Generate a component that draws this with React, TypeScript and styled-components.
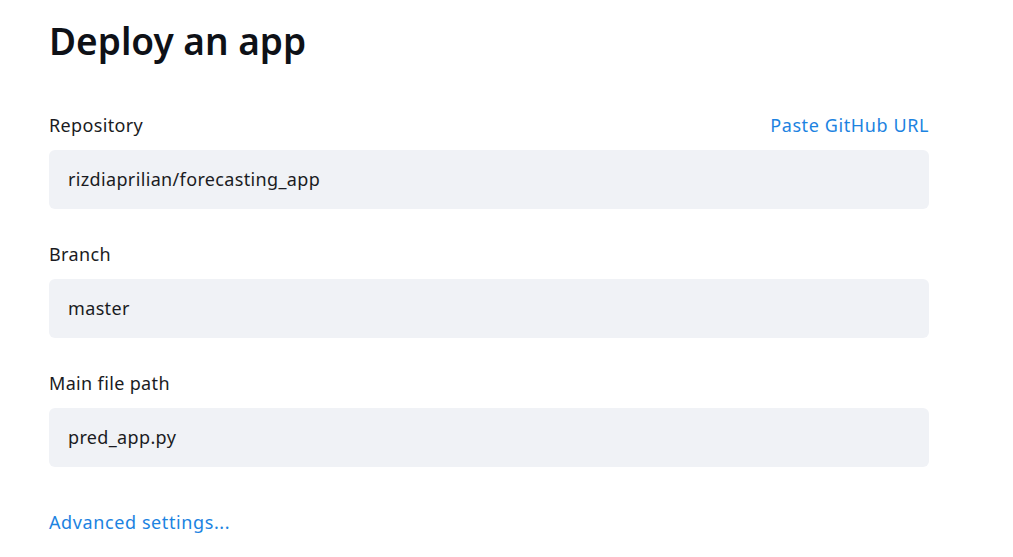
import React from "react";
import styled, { createGlobalStyle } from "styled-components";

const Global = createGlobalStyle`
  html, body { margin: 0; padding: 0; background: #ffffff; }
  body { font-family: "Noto Sans", "Open Sans", sans-serif; color: #262730; }
`;

const Page = styled.main`
  width: 880px;
  padding: 18px 0 0 49px;
  display: flex;
  flex-direction: column;
`;

const Title = styled.h1`
  margin: 0 0 50px;
  font-size: 37px;
  line-height: 46px;
  font-weight: 600;
  color: #0e1117;
`;

const Field = styled.section`
  display: flex;
  flex-direction: column;
  gap: 12px;
  margin-bottom: 34px;
`;

const LabelRow = styled.div`
  display: flex;
  justify-content: space-between;
  align-items: center;
  height: 24px;
  box-sizing: border-box;
  padding-bottom: 2px;
`;

const Label = styled.label`
  font-size: 18px;
  line-height: 22px;
  letter-spacing: 0.35px;
  color: #1a1b22;
`;

const Link = styled.a`
  font-size: 18px;
  line-height: 22px;
  letter-spacing: 0.6px;
  color: #1c83e1;
  text-decoration: none;
  cursor: pointer;
`;

const InputBox = styled.div`
  height: 59px;
  box-sizing: border-box;
  background: #f0f2f6;
  border-radius: 6px;
  padding: 0 19px 2px;
  display: flex;
  align-items: center;
  font-size: 18px;
  letter-spacing: 0.35px;
  color: #1a1b22;
`;

const Advanced = styled(Link)`
  margin-top: 10px;
  align-self: flex-start;
`;

type FieldProps = { label: string; value: string; action?: string };

const FormField = ({ label, value, action }: FieldProps) => (
  <Field>
    <LabelRow>
      <Label>{label}</Label>
      {action && <Link>{action}</Link>}
    </LabelRow>
    <InputBox>{value}</InputBox>
  </Field>
);

export default function App() {
  return (
    <>
      <Global />
      <Page>
        <Title>Deploy an app</Title>
        <FormField label="Repository" value="rizdiaprilian/forecasting_app" action="Paste GitHub URL" />
        <FormField label="Branch" value="master" />
        <FormField label="Main file path" value="pred_app.py" />
        <Advanced>Advanced settings...</Advanced>
      </Page>
    </>
  );
}
